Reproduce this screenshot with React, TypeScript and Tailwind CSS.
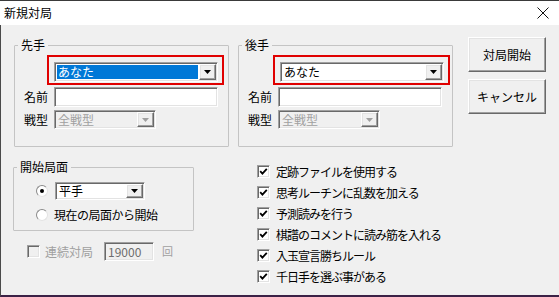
import { ReactNode } from "react";

const font = { fontFamily: "'Noto Sans CJK JP', 'Noto Sans', sans-serif" };

// sunken 3D edge used by combo boxes, text boxes and check boxes
const sunken =
  "border border-t-[#a0a0a0] border-l-[#a0a0a0] border-r-white border-b-white shadow-[inset_1px_1px_0_#696969,inset_-1px_-1px_0_#e3e3e3]";

// raised 3D edge used by push buttons
const raised =
  "border border-t-white border-l-white border-r-[#696969] border-b-[#696969] shadow-[inset_-1px_-1px_0_#a0a0a0,inset_1px_1px_0_#e3e3e3]";

function Arrow({ disabled }: { disabled?: boolean }) {
  return (
    <svg width="7" height="4" viewBox="0 0 7 4">
      <path d="M0 0h7L3.5 4z" fill={disabled ? "#a0a0a0" : "#000000"} />
    </svg>
  );
}

function DropButton({ disabled }: { disabled?: boolean }) {
  return (
    <div className={`w-[17px] h-full flex items-center justify-center bg-[#f0f0f0] ${raised}`}>
      <Arrow disabled={disabled} />
    </div>
  );
}

function Combo({
  text,
  width,
  height,
  selected,
  disabled,
}: {
  text: string;
  width: string;
  height: string;
  selected?: boolean;
  disabled?: boolean;
}) {
  return (
    <div className={`${width} ${height} flex p-[1px] ${disabled ? "bg-[#f0f0f0]" : "bg-white"} ${sunken}`}>
      <div className="flex-1 flex items-center pl-[1px] pr-[1px] py-[1px]">
        <div
          className={`w-full h-full flex items-center pl-[1px] text-[12px] leading-none ${
            selected ? "bg-[#0078d7] text-white" : disabled ? "text-[#a0a0a0]" : "text-black"
          }`}
        >
          {text}
        </div>
      </div>
      <DropButton disabled={disabled} />
    </div>
  );
}

function CheckBox({ checked, disabled }: { checked?: boolean; disabled?: boolean }) {
  return (
    <div
      className={`w-[13px] h-[13px] shrink-0 flex items-center justify-center ${
        disabled ? "bg-[#f0f0f0]" : "bg-white"
      } ${sunken}`}
    >
      {checked && (
        <svg width="9" height="9" viewBox="0 0 9 9">
          <path d="M1.2 4.2 L3.4 6.6 L7.8 1.8" fill="none" stroke="#000" strokeWidth="1.8" />
        </svg>
      )}
    </div>
  );
}

function Radio({ checked }: { checked?: boolean }) {
  return (
    <div className="w-[12px] h-[12px] shrink-0 rounded-full bg-white border border-t-[#8a8a8a] border-l-[#8a8a8a] border-r-[#e3e3e3] border-b-[#e3e3e3] flex items-center justify-center">
      {checked && <div className="w-[4px] h-[4px] rounded-full bg-black" />}
    </div>
  );
}

function Group({
  title,
  className,
  children,
}: {
  title: string;
  className: string;
  children: ReactNode;
}) {
  return (
    <fieldset className={`border border-[#c4c4c4] rounded-[1px] ${className}`}>
      <legend className="ml-[3px] px-[3px] text-[12px] leading-[16px]">{title}</legend>
      {children}
    </fieldset>
  );
}

function PlayerGroup({ title, selected, redMargin }: { title: string; selected?: boolean; redMargin: string }) {
  return (
    <Group title={title} className="w-[215px] h-[110px]">
      <div className={`mt-[2px] ${redMargin} w-[177px] h-[30px] border-2 border-[#e00000] pt-[5px] pb-[1px] pl-[5px] pr-[4px]`}>
        <Combo text="あなた" width="w-[164px]" height="h-[20px]" selected={selected} />
      </div>
      <div className="mt-[2px] flex items-center pl-[9px]">
        <span className="w-[30px] text-[12px] leading-none">名前</span>
        <div className={`w-[164px] h-[20px] bg-white ${sunken}`} />
      </div>
      <div className="mt-[3px] flex items-center pl-[9px]">
        <span className="w-[30px] text-[12px] leading-none">戦型</span>
        <Combo text="全戦型" width="w-[102px]" height="h-[19px]" disabled />
      </div>
    </Group>
  );
}

function PushButton({ label }: { label: string }) {
  return (
    <div className={`w-[78px] h-[35px] flex items-center justify-center bg-[#f0f0f0] text-[12px] ${raised}`}>
      {label}
    </div>
  );
}

const options = [
  "定跡ファイルを使用する",
  "思考ルーチンに乱数を加える",
  "予測読みを行う",
  "棋譜のコメントに読み筋を入れる",
  "入玉宣言勝ちルール",
  "千日手を選ぶ事がある",
];

export default function App() {
  return (
    <div className="w-[559px] h-[297px] flex flex-col overflow-hidden text-black" style={font}>
      {/* title bar */}
      <div className="h-[25px] shrink-0 bg-white border-t border-[#3a3a3a] flex items-center justify-between pl-[4px] pr-[10px]">
        <span className="text-[12px] leading-none">新規対局</span>
        <svg width="12" height="12" viewBox="0 0 12 12">
          <path d="M0.5 0.5 L11.5 11.5 M11.5 0.5 L0.5 11.5" stroke="#111" strokeWidth="1" />
        </svg>
      </div>

      <div className="flex-1 bg-[#f0f0f0] border-l border-l-[#4a4a4a] border-b-2 border-b-[#3b2146] flex flex-col">
        {/* players and buttons */}
        <div className="flex pl-[13px] pt-[12px]">
          <PlayerGroup title="先手" selected redMargin="ml-[32px]" />
          <div className="ml-[9px]">
            <PlayerGroup title="後手" redMargin="ml-[34px]" />
          </div>
          <div className="ml-[15px] flex flex-col gap-[7px]">
            <PushButton label="対局開始" />
            <PushButton label="キャンセル" />
          </div>
        </div>

        <div className="flex">
          {/* start position and continuous play */}
          <div className="w-[256px] flex flex-col pl-[12px]">
            <Group title="開始局面" className="mt-[12px] w-[181px] h-[72px]">
              <div className="mt-[7px] flex items-center pl-[22px]">
                <Radio checked />
                <div className="ml-[7px]">
                  <Combo text="平手" width="w-[90px]" height="h-[18px]" />
                </div>
              </div>
              <div className="mt-[6px] h-[17px] flex items-center pl-[22px]">
                <Radio />
                <span className="ml-[6px] text-[12px] leading-none tracking-[-0.5px]">現在の局面から開始</span>
              </div>
            </Group>
            <div className="mt-[11px] flex items-center pl-[14px] text-[12px] leading-none">
              <CheckBox disabled />
              <span className="ml-[5px] text-[#a0a0a0]">連続対局</span>
              <div className={`ml-[11px] w-[50px] h-[19px] flex items-center pl-[3px] text-[#6d6d6d] ${sunken}`}>
                19000
              </div>
              <span className="ml-[8px] text-[#a0a0a0] text-[11px]">回</span>
            </div>
          </div>

          {/* engine options */}
          <div className="mt-[14px] flex flex-col">
            {options.map((o) => (
              <div key={o} className="h-[21px] flex items-center">
                <CheckBox checked />
                <span className="ml-[6px] text-[12px] leading-none tracking-[-1px]">{o}</span>
              </div>
            ))}
          </div>
        </div>
      </div>
    </div>
  );
}
